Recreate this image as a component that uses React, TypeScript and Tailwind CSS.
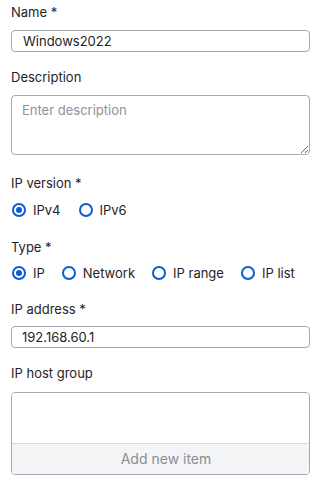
import React from "react";

function Radio({ label, checked }: { label: string; checked?: boolean }) {
  return (
    <label className="flex items-center gap-[7px] h-[20px]">
      <span className="w-[14px] h-[14px] rounded-full border-2 border-[#0b5cd5] flex items-center justify-center box-border">
        {checked && <span className="w-[6px] h-[6px] rounded-full bg-[#0b5cd5]" />}
      </span>
      <span>{label}</span>
    </label>
  );
}

export default function App() {
  return (
    <div
      className="w-[320px] h-[479px] bg-white pl-[11px] pr-[10px] text-[13px] leading-[20px] text-[#1f2328]"
      style={{ fontFamily: "Inter, 'Noto Sans', sans-serif" }}
    >
      <div className="pt-[2px]">Name *</div>
      <input
        className="mt-[8px] block w-full h-[22px] border border-[#a5aab0] rounded-[4px] px-[11px] text-[13px] text-[#1f2328] outline-none"
        defaultValue="Windows2022"
      />
      <div className="mt-[15px]">Description</div>
      <textarea
        className="mt-[8px] block w-full h-[60px] border border-[#a5aab0] rounded-[4px] px-[10px] py-[4px] text-[13px] leading-[20px] outline-none resize-y placeholder:text-[#8d9298]"
        placeholder="Enter description"
      />
      <div className="mt-[18px]">IP version *</div>
      <div className="mt-[7px] flex items-center gap-[18px] pl-px">
        <Radio label="IPv4" checked />
        <Radio label="IPv6" />
      </div>
      <div className="mt-[17px]">Type *</div>
      <div className="mt-[6px] flex items-center gap-[17px] pl-px">
        <Radio label="IP" checked />
        <Radio label="Network" />
        <Radio label="IP range" />
        <Radio label="IP list" />
      </div>
      <div className="mt-[16px]">IP address *</div>
      <input
        className="mt-[7px] block w-full h-[22px] border border-[#a5aab0] rounded-[4px] px-[10px] text-[13px] text-[#1f2328] outline-none"
        defaultValue="192.168.60.1"
      />
      <div className="mt-[15px]">IP host group</div>
      <div className="mt-[9px] border border-[#a5aab0] rounded-[4px] overflow-hidden">
        <div className="h-[50px] bg-white" />
        <div className="h-[31px] bg-[#f3f4f6] border-t border-[#d5d8dc] flex items-center justify-center pl-[11px] text-[14px] text-[#8a8f95]">
          Add new item
        </div>
      </div>
    </div>
  );
}
